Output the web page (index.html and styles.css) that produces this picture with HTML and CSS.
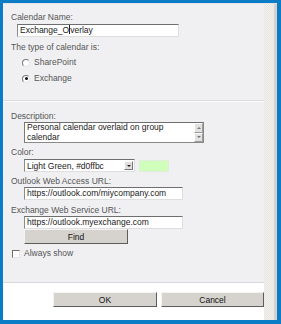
FILE: index.html
```html
<!DOCTYPE html>
<html lang="en">
<head>
    <meta charset="UTF-8">
    <title>Calendar Overlay Settings</title>
    <link rel="stylesheet" href="styles.css">
</head>
<body>
    <div class="frame">
        <div class="dialog">
            <div class="main">
                <section class="block block-top">
                    <div class="label">Calendar Name:</div>
                    <div class="field field-name">Exchange_O<span class="caret"></span>verlay</div>
                    <div class="label label-gap">The type of calendar is:</div>
                    <div class="option option-first"><span class="radio"></span>SharePoint</div>
                    <div class="option"><span class="radio checked"></span>Exchange</div>
                </section>

                <section class="block block-settings">
                    <div class="label">Description:</div>
                    <div class="memo">
                        <div class="memo-text">Personal calendar overlaid on group calendar</div>
                        <div class="memo-bar">
                            <span class="memo-btn up"></span>
                            <span class="memo-btn down"></span>
                        </div>
                    </div>

                    <div class="label label-tight">Color:</div>
                    <div class="color-row">
                        <div class="select">
                            <span class="select-text">Light Green, #d0ffbc</span>
                            <span class="select-btn"></span>
                        </div>
                        <div class="swatch"></div>
                    </div>

                    <div class="label label-tight">Outlook Web Access URL:</div>
                    <div class="field field-url">https://outlook.com/miycompany.com</div>

                    <div class="label label-gap">Exchange Web Service URL:</div>
                    <div class="field field-url">https://outlook.myexchange.com</div>
                    <button class="btn btn-find">Find</button>

                    <div class="option check-row"><span class="check"></span>Always show</div>
                </section>

                <footer class="footer">
                    <button class="btn btn-footer">OK</button>
                    <button class="btn btn-footer">Cancel</button>
                </footer>
            </div>
            <div class="side"></div>
        </div>
    </div>
</body>
</html>
```

FILE: styles.css
```css
html, body {
    margin: 0;
    padding: 0;
}

body {
    font-family: "Liberation Sans", Arial, sans-serif;
    font-size: 8.5px;
    color: #555;
}

.frame {
    width: 281px;
    height: 324px;
    box-sizing: border-box;
    background-color: #0b7cc6;
    padding: 3px 4px 4px 3px;
}

.dialog {
    display: flex;
    height: 100%;
    background-color: #f0f0f2;
    border-top: 1px solid #e4e4e6;
    box-sizing: border-box;
}

.main {
    width: 261px;
    display: flex;
    flex-direction: column;
}

.side {
    flex: 1;
    border-right: 3px solid #d4d2cd;
    background-color: #ecebe6;
    background-image: repeating-conic-gradient(#f3f2ef 0 25%, #e6e4de 0 50%);
    background-size: 2px 2px;
}

.label {
    line-height: 11px;
    height: 11px;
    white-space: nowrap;
}

.label-gap {
    margin-top: 5px;
}

.label-tight {
    margin-top: 4px;
}

.block {
    padding-left: 8px;
}

.block-top {
    box-sizing: border-box;
    height: 97px;
    padding-top: 8px;
    border-bottom: 1px solid #dcdcde;
}

.block-settings {
    flex: 1;
    padding-top: 9px;
    border-top: 1px solid #fafafa;
    border-bottom: 1px solid #d8d8da;
}

.field {
    box-sizing: border-box;
    height: 13px;
    line-height: 11px;
    padding-left: 2px;
    background: #fff;
    color: #222;
    border: 1px solid;
    border-color: #6e6e6e #dedede #dedede #8a8a8a;
    white-space: nowrap;
    overflow: hidden;
}

.field-name {
    width: 162px;
    margin: 1px 0 0 6px;
}

.field-url {
    width: 159px;
    margin: 0 0 0 13px;
}

.caret {
    display: inline-block;
    width: 1px;
    height: 9px;
    background: #222;
    vertical-align: -1px;
}

.option {
    display: flex;
    align-items: center;
    height: 11px;
    line-height: 11px;
    margin-top: 5px;
    padding-left: 11px;
}

.option-first {
    margin-top: 4px;
}

.radio {
    width: 6px;
    height: 6px;
    margin-right: 4px;
    border-radius: 50%;
    background: #fff;
    border: 1px solid;
    border-color: #7a7a7a #e4e4e4 #e4e4e4 #7a7a7a;
    position: relative;
}

.radio.checked::after {
    content: "";
    position: absolute;
    left: 1.5px;
    top: 1.5px;
    width: 3px;
    height: 3px;
    border-radius: 50%;
    background: #111;
}

.memo {
    display: flex;
    width: 180px;
    height: 21px;
    margin: 0 0 0 13px;
    box-sizing: border-box;
    background: #fff;
    border: 1px solid;
    border-color: #6e6e6e #8a8a8a #8a8a8a #7a7a7a;
}

.memo-text {
    flex: 1;
    padding: 0 2px;
    line-height: 9.5px;
    color: #222;
}

.memo-bar {
    width: 9px;
    display: flex;
    flex-direction: column;
    background: #eeeeec;
}

.memo-btn {
    flex: 1;
    position: relative;
    background: #e2e2e0;
    border: 1px solid;
    border-color: #fff #9a9a9a #9a9a9a #fff;
}

.memo-btn::after {
    content: "";
    position: absolute;
    left: 2px;
    top: 3px;
    border-left: 2px solid transparent;
    border-right: 2px solid transparent;
}

.memo-btn.up::after {
    border-bottom: 2px solid #777;
}

.memo-btn.down::after {
    top: 2px;
    border-top: 2px solid #777;
}

.color-row {
    display: flex;
    align-items: center;
    gap: 4px;
    margin: 1px 0 0 13px;
}

.select {
    display: flex;
    align-items: center;
    box-sizing: border-box;
    width: 111px;
    height: 13px;
    background: #fff;
    color: #222;
    border: 1px solid;
    border-color: #6e6e6e #dedede #dedede #8a8a8a;
}

.select-text {
    flex: 1;
    padding-left: 2px;
    white-space: nowrap;
}

.select-btn {
    position: relative;
    width: 9px;
    height: 9px;
    margin-right: 1px;
    background: #e0dfdc;
    border: 1px solid;
    border-color: #fff #777 #777 #fff;
    box-sizing: border-box;
}

.select-btn::after {
    content: "";
    position: absolute;
    left: 1.5px;
    top: 2.5px;
    border-left: 2px solid transparent;
    border-right: 2px solid transparent;
    border-top: 2px solid #222;
}

.swatch {
    width: 30px;
    height: 12px;
    box-sizing: border-box;
    background: #d0ffbc;
    border: 1px solid #e2ecdc;
}

.btn {
    font-family: inherit;
    font-size: 8.5px;
    color: #111;
    background: #d6d3ce;
    border: 1px solid;
    border-color: #f4f4f2 #5c5c5c #5c5c5c #f4f4f2;
    padding: 0;
    cursor: pointer;
}

.btn-find {
    display: block;
    width: 104px;
    height: 15px;
    margin-left: 13px;
}

.check-row {
    margin-top: 4px;
    padding-left: 1px;
}

.check {
    width: 6px;
    height: 6px;
    margin-right: 4px;
    background: #fff;
    border: 1px solid;
    border-color: #6e6e6e #e4e4e4 #e4e4e4 #6e6e6e;
}

.footer {
    height: 37px;
    background: #fff;
    display: flex;
    justify-content: flex-end;
    align-items: flex-start;
    gap: 4px;
    padding: 9px 0 0;
    box-sizing: border-box;
}

.btn-footer {
    width: 104px;
    height: 15px;
}

.btn-footer + .btn-footer {
    width: 103px;
}
```
